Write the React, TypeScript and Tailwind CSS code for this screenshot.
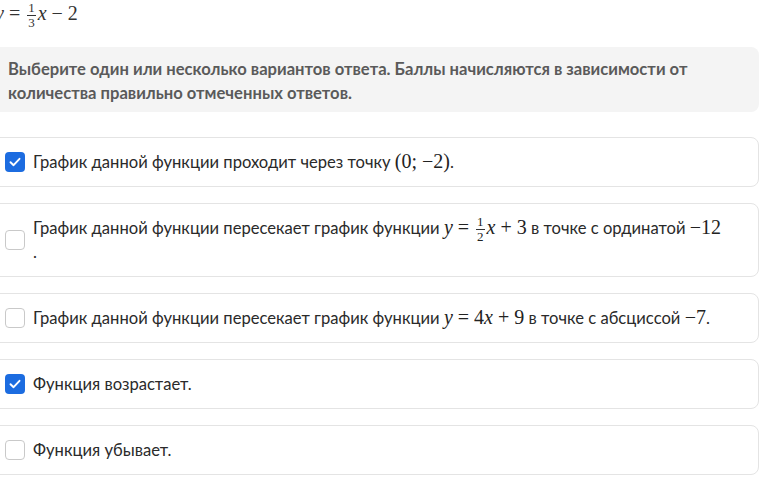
import React from "react";

const mathFont = { fontFamily: '"Liberation Serif", "Times New Roman", serif' };

function Frac({ n, d }: { n: string; d: string }) {
  return (
    <span className="inline-flex flex-col items-center align-middle mx-[2px] my-[-8px] text-[13px] leading-[12px]">
      <span className="px-[1px] pb-[1px]">{n}</span>
      <span className="block w-full h-px bg-[#333]" />
      <span className="px-[1px] pt-[1px]">{d}</span>
    </span>
  );
}

function M({ children }: { children: React.ReactNode }) {
  return (
    <span className="text-[20px] leading-[16px] text-[#222]" style={mathFont}>
      {children}
    </span>
  );
}

const I = ({ children }: { children: React.ReactNode }) => <i className="italic">{children}</i>;
const Op = ({ children }: { children: React.ReactNode }) => <span className="mx-[5px]">{children}</span>;

function Box({ checked }: { checked: boolean }) {
  return checked ? (
    <span className="shrink-0 w-[20px] h-[20px] rounded-[4px] bg-[#1c6ce0] flex items-center justify-center">
      <svg width="12" height="10" viewBox="0 0 12 10" fill="none">
        <path d="M1.5 5.2 L4.6 8.2 L10.5 1.8" stroke="white" strokeWidth="1.9" strokeLinecap="round" strokeLinejoin="round" />
      </svg>
    </span>
  ) : (
    <span className="shrink-0 w-[20px] h-[20px] rounded-[4px] border-[1.5px] border-[#c9c9c9] bg-white" />
  );
}

function Option({ checked, children }: { checked: boolean; children: React.ReactNode }) {
  return (
    <div className="flex items-center gap-[8px] border border-[#e4e4e4] rounded-[8px] px-[16px] py-[12px]">
      <Box checked={checked} />
      <div className="text-[16.6px] leading-[24px] text-[#2a2a2a]">{children}</div>
    </div>
  );
}

export default function App() {
  return (
    <div className="w-[772px] h-[488px] overflow-hidden bg-white" style={{ fontFamily: 'Lato, "Noto Sans", sans-serif' }}>
      <div className="ml-[-12px] w-[771px]">
        <div className="h-[47px] pl-[7px] pt-[2px] leading-[22px] text-[#333]">
          <span className="text-[20px] text-[#333]" style={mathFont}>
            <I>y</I>
            <Op>=</Op>
            <Frac n="1" d="3" />
            <I>x</I>
            <Op>−</Op>2
          </span>
        </div>

        <div className="bg-[#f4f4f4] rounded-[8px] px-[20px] pt-[10px] pb-[7px] text-[16.6px] leading-[24px] font-bold text-[#5a5a5a]">
          Выберите один или несколько вариантов ответа. Баллы начисляются в зависимости от
          <br />
          количества правильно отмеченных ответов.
        </div>

        <div className="mt-[25px] flex flex-col gap-[16px]">
          <Option checked>
            График данной функции проходит через точку{" "}
            <M>(0; −2)</M>.
          </Option>
          <Option checked={false}>
            График данной функции пересекает график функции{" "}
            <M>
              <I>y</I>
              <Op>=</Op>
              <Frac n="1" d="2" />
              <I>x</I>
              <Op>+</Op>3
            </M>{" "}
            в точке с ординатой{" "}
            <M>−12</M>
            <br />.
          </Option>
          <Option checked={false}>
            График данной функции пересекает график функции{" "}
            <M>
              <I>y</I>
              <Op>=</Op>4<I>x</I>
              <Op>+</Op>9
            </M>{" "}
            в точке с абсциссой <M>−7</M>.
          </Option>
          <Option checked>Функция возрастает.</Option>
          <Option checked={false}>Функция убывает.</Option>
        </div>
      </div>
    </div>
  );
}
